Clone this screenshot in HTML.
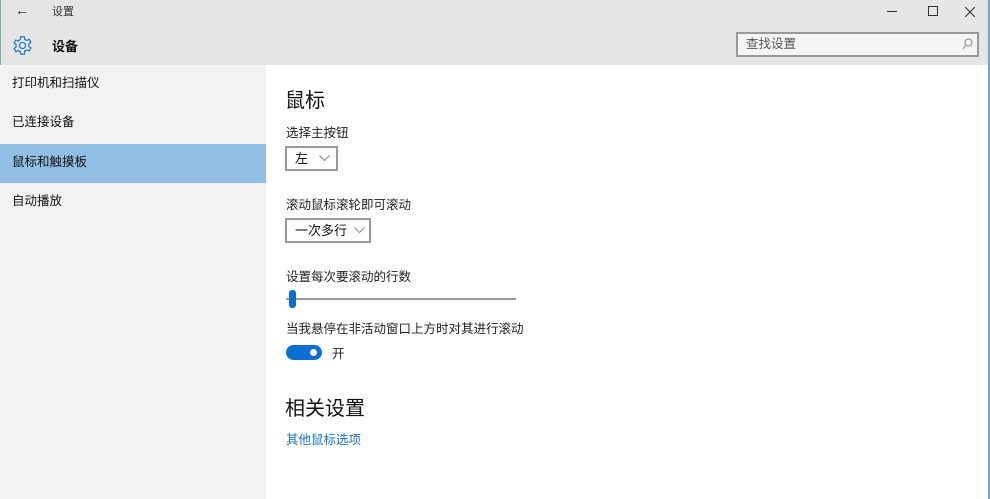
<!DOCTYPE html>
<html><head><meta charset="utf-8"><style>
*{margin:0;padding:0;box-sizing:border-box}
body{width:990px;height:499px;overflow:hidden;background:#fff;font-family:"Liberation Sans","Noto Sans CJK SC",sans-serif;color:#000;position:relative}
.abs{position:absolute}
.hdr{left:0;top:0;width:990px;height:65px;background:#e6e6e6}
.side{left:0;top:65px;width:266px;height:434px;background:#f2f2f2}
.item{position:absolute;left:0;width:266px;height:39px;font-size:12.5px;padding-left:12px;line-height:37px;color:#111}
.sel{background:#91bfe6}
.t{font-size:12.5px;color:#222}
.dd{border:2px solid #999;background:#fff;height:25px;font-size:13px;line-height:21px;padding-left:8px;color:#111}
.chev{position:absolute;top:7px}
</style></head><body>
<div class="abs hdr"></div>
<div class="abs" style="left:0;top:0;width:1px;height:499px;background:#8aa"></div>
<div class="abs" style="left:988px;top:0;width:2px;height:499px;background:#6aa6d8"></div>
<div class="abs" style="left:15px;top:2px;font-size:14px;color:#222">←</div>
<div class="abs" style="left:52px;top:3px;font-size:11px;color:#333">设置</div>
<svg class="abs" style="left:12px;top:35px" width="21" height="21" viewBox="0 0 24 24" fill="none" stroke="#1976d2" stroke-width="1.4"><circle cx="12" cy="12" r="3.5"/><path d="M10 2h4l.6 3 2.2 1.2 2.8-1.3 2 3.4-2.3 2 0 2.6 2.3 2-2 3.4-2.8-1.3-2.2 1.2L14 22h-4l-.6-3-2.2-1.2-2.8 1.3-2-3.4 2.3-2V11.1l-2.3-2 2-3.4 2.8 1.3L9.4 5z"/></svg>
<div class="abs" style="left:52px;top:36px;font-size:13px;font-weight:bold;color:#111">设备</div>
<div class="abs" style="left:887px;top:11px;width:10px;height:1px;background:#333"></div>
<div class="abs" style="left:928px;top:6px;width:10px;height:10px;border:1px solid #333"></div>
<svg class="abs" style="left:965px;top:7px" width="10" height="10" viewBox="0 0 10 10" stroke="#333" stroke-width="1.1"><path d="M0 0L10 10M10 0L0 10"/></svg>
<div class="abs" style="left:736px;top:32px;width:243px;height:25px;border:2px solid #999;background:#f5f5f5;font-size:12.5px;color:#555;padding-left:8px;line-height:21px">查找设置</div>
<svg class="abs" style="left:962px;top:38px" width="11" height="12" viewBox="0 0 11 12" fill="none" stroke="#888" stroke-width="1"><circle cx="6.5" cy="4.5" r="3.5"/><path d="M4 7L1 11"/></svg>
<div class="abs side">
<div class="item" style="top:0">打印机和扫描仪</div>
<div class="item" style="top:39px">已连接设备</div>
<div class="item sel" style="top:79px">鼠标和触摸板</div>
<div class="item" style="top:118px">自动播放</div>
</div>
<div class="abs" style="left:285px;top:84px;font-size:20px;color:#111">鼠标</div>
<div class="abs t" style="left:286px;top:122px">选择主按钮</div>
<div class="abs dd" style="left:285px;top:146px;width:53px">左<svg class="chev" style="left:32px" width="11" height="7" viewBox="0 0 11 7" fill="none" stroke="#888"><path d="M0.5 0.5L5.5 5.5 10.5 0.5"/></svg></div>
<div class="abs t" style="left:286px;top:194px">滚动鼠标滚轮即可滚动</div>
<div class="abs dd" style="left:285px;top:218px;width:86px">一次多行<svg class="chev" style="left:67px" width="11" height="7" viewBox="0 0 11 7" fill="none" stroke="#888"><path d="M0.5 0.5L5.5 5.5 10.5 0.5"/></svg></div>
<div class="abs t" style="left:286px;top:266px">设置每次要滚动的行数</div>
<div class="abs" style="left:286px;top:298px;width:230px;height:2px;background:#999"></div>
<div class="abs" style="left:289px;top:290px;width:7px;height:18px;border-radius:3px;background:#0a6fd0"></div>
<div class="abs t" style="left:286px;top:318px">当我悬停在非活动窗口上方时对其进行滚动</div>
<div class="abs" style="left:286px;top:345px;width:36px;height:15px;border-radius:8px;background:#0a6fd0"></div>
<div class="abs" style="left:310px;top:349px;width:7px;height:7px;border-radius:50%;background:#fff"></div>
<div class="abs t" style="left:332px;top:343px">开</div>
<div class="abs" style="left:285px;top:392px;font-size:20px;color:#111">相关设置</div>
<div class="abs" style="left:286px;top:429px;font-size:12.5px;color:#1a73c8">其他鼠标选项</div>
</body></html>
